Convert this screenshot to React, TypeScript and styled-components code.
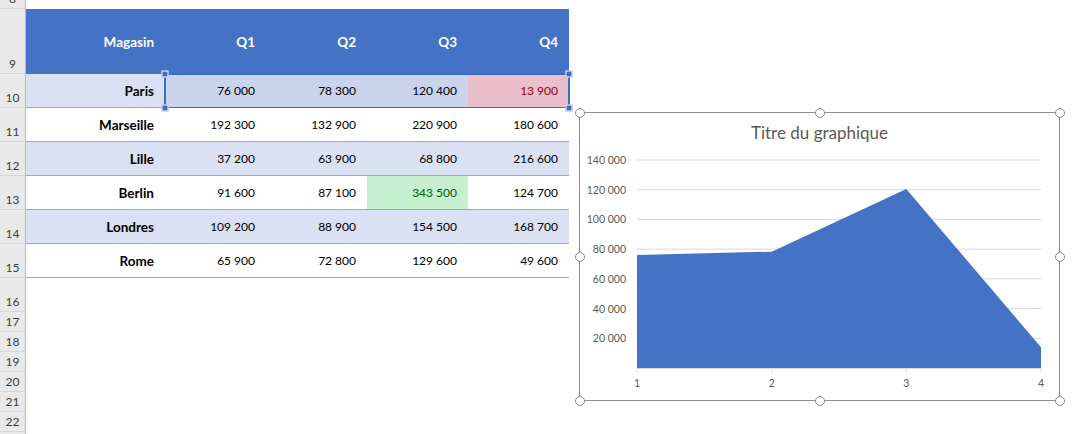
import styled, { createGlobalStyle } from "styled-components";

const GlobalStyle = createGlobalStyle`
  html, body { margin: 0; padding: 0; background: #fff; }
  body { font-family: Lato, "Liberation Sans", sans-serif; overflow: hidden; }
`;

const Page = styled.div`
  display: flex;
  align-items: flex-start;
  width: 1081px;
  height: 434px;
  overflow: hidden;
`;

const Sheet = styled.div`
  display: flex;
  flex-direction: column;
  width: 570px;
  flex: 0 0 570px;
`;

const Row = styled.div<{ $h: number }>`
  display: flex;
  height: ${p => p.$h}px;
`;

const RowHead = styled.div`
  flex: 0 0 26px;
  box-sizing: border-box;
  border-right: 1px solid #b8b8b8;
  border-bottom: 1px solid #d6d6d6;
  background: #e9e9e9;
  color: #3c3c3c;
  font-size: 12px;
  line-height: 14px;
  display: flex;
  align-items: flex-end;
  justify-content: center;
  padding-bottom: 2px;
  overflow: hidden;
`;

const Cells = styled.div<{ $sel?: boolean }>`
  display: flex;
  position: relative;
  ${p => p.$sel && `
    &::after {
      content: "";
      position: absolute;
      left: -1px; top: -1px; right: -1px; bottom: -1px;
      border: 2px solid #3b6cc0;
      pointer-events: none;
    }
  `}
`;

const Cell = styled.div<{ $w: number; $bg?: string; $color?: string; $bold?: boolean; $line?: boolean }>`
  flex: 0 0 ${p => p.$w}px;
  box-sizing: border-box;
  display: flex;
  align-items: center;
  justify-content: flex-end;
  padding-right: 11px;
  font-size: ${p => (p.$bold ? 13.5 : 12)}px;
  background: ${p => p.$bg || "#fff"};
  color: ${p => p.$color || "#000"};
  font-weight: ${p => (p.$bold ? 700 : 400)};
  border-bottom: ${p => (p.$line ? "1px solid #8ea9db" : "none")};
`;

const SelHandle = styled.span<{ $x: string; $y: string }>`
  position: absolute;
  left: ${p => p.$x};
  top: ${p => p.$y};
  width: 5px;
  height: 5px;
  transform: translate(-50%, -50%);
  background: #3b6cc0;
  border: 1px solid #fff;
  z-index: 2;
`;

const ChartBox = styled.div`
  position: relative;
  margin: 112px 0 0 9px;
  width: 481px;
  height: 289px;
  box-sizing: border-box;
  border: 1px solid #8c8c8c;
  background: #fff;
  display: flex;
  flex-direction: column;
  align-items: center;
`;

const ChartTitle = styled.div`
  margin-top: 9px;
  font-size: 17px;
  line-height: 22px;
  color: #595959;
`;

const Knob = styled.span<{ $x: string; $y: string }>`
  position: absolute;
  left: ${p => p.$x};
  top: ${p => p.$y};
  width: 8px;
  height: 8px;
  border-radius: 50%;
  border: 1.5px solid #8a8a8a;
  background: #fff;
  transform: translate(-50%, -50%);
`;

const widths = [139, 101, 101, 101, 101];

const data: [string, number[]][] = [
  ["Paris", [76000, 78300, 120400, 13900]],
  ["Marseille", [192300, 132900, 220900, 180600]],
  ["Lille", [37200, 63900, 68800, 216600]],
  ["Berlin", [91600, 87100, 343500, 124700]],
  ["Londres", [109200, 88900, 154500, 168700]],
  ["Rome", [65900, 72800, 129600, 49600]],
];

const fmt = (n: number) => n.toLocaleString("en-US").replace(/,/g, " ");

function AreaChart() {
  const base = 224;
  const step = 208 / 140000;
  const xs = [57, 191.7, 326.3, 461];
  const paris = data[0][1];
  const pts = paris.map((v, i) => `${xs[i]},${base - v * step}`).join(" ");
  const ticks = [20000, 40000, 60000, 80000, 100000, 120000, 140000];
  return (
    <svg width={479} height={254} style={{ display: "block" }}>
      {ticks.map(t => (
        <g key={t}>
          <line x1={57} x2={461} y1={base - t * step} y2={base - t * step} stroke="#d9d9d9" strokeWidth={1} />
          <text x={46} y={base - t * step + 4} textAnchor="end" fontSize={10.5} fill="#595959" fontFamily="Lato, sans-serif">
            {fmt(t)}
          </text>
        </g>
      ))}
      <polygon points={`${xs[0]},${base} ${pts} ${xs[3]},${base}`} fill="#4472c4" />
      <line x1={57} x2={461} y1={base + 0.5} y2={base + 0.5} stroke="#d9d9d9" />
      {xs.map((x, i) => (
        <g key={i}>
          <line x1={x} x2={x} y1={base} y2={base + 4} stroke="#d9d9d9" />
          <text x={x} y={base + 19} textAnchor="middle" fontSize={10.5} fill="#595959" fontFamily="Lato, sans-serif">
            {i + 1}
          </text>
        </g>
      ))}
    </svg>
  );
}

export default function App() {
  return (
    <>
      <GlobalStyle />
      <Page>
        <Sheet>
          <Row $h={9}>
            <RowHead>8</RowHead>
          </Row>
          <Row $h={65}>
            <RowHead>9</RowHead>
            <Cells>
              {["Magasin", "Q1", "Q2", "Q3", "Q4"].map((h, i) => (
                <Cell key={h} $w={widths[i]} $bg="#4472c4" $color="#fff" $bold>
                  {h}
                </Cell>
              ))}
            </Cells>
          </Row>
          {data.map(([name, vals], r) => {
            const band = r % 2 === 0 ? "#d9e1f2" : "#fff";
            const sel = r === 0;
            return (
              <Row $h={34} key={name}>
                <RowHead>{r + 10}</RowHead>
                <Cell $w={widths[0]} $bg={band} $bold $line>
                  {name}
                </Cell>
                <Cells $sel={sel}>
                  {vals.map((v, i) => {
                    let bg = sel ? "#c9d4ec" : band;
                    let color = "#000";
                    if (sel && i === 3) {
                      bg = "#e9bfcb";
                      color = "#9c0006";
                    }
                    if (name === "Berlin" && i === 2) {
                      bg = "#c6efce";
                      color = "#006100";
                    }
                    return (
                      <Cell key={i} $w={widths[i + 1]} $bg={bg} $color={color} $line>
                        {fmt(v)}
                      </Cell>
                    );
                  })}
                  {sel && (
                    <>
                      <SelHandle $x="0" $y="0" />
                      <SelHandle $x="100%" $y="0" />
                      <SelHandle $x="0" $y="100%" />
                      <SelHandle $x="100%" $y="100%" />
                    </>
                  )}
                </Cells>
              </Row>
            );
          })}
          <Row $h={34}>
            <RowHead>16</RowHead>
          </Row>
          {[17, 18, 19, 20, 21, 22].map(n => (
            <Row $h={20} key={n}>
              <RowHead>{n}</RowHead>
            </Row>
          ))}
          <Row $h={10}>
            <RowHead />
          </Row>
        </Sheet>
        <ChartBox>
          <ChartTitle>Titre du graphique</ChartTitle>
          <AreaChart />
          <Knob $x="-0.5px" $y="-0.5px" />
          <Knob $x="50%" $y="-0.5px" />
          <Knob $x="calc(100% + 0.5px)" $y="-0.5px" />
          <Knob $x="-0.5px" $y="50%" />
          <Knob $x="calc(100% + 0.5px)" $y="50%" />
          <Knob $x="-0.5px" $y="calc(100% + 0.5px)" />
          <Knob $x="50%" $y="calc(100% + 0.5px)" />
          <Knob $x="calc(100% + 0.5px)" $y="calc(100% + 0.5px)" />
        </ChartBox>
      </Page>
    </>
  );
}
